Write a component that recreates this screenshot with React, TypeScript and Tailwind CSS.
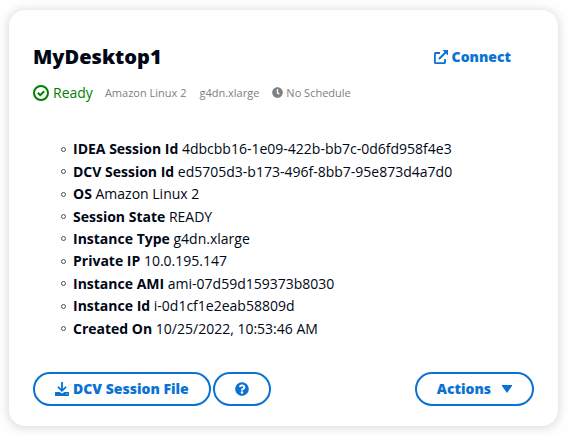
import { FaClock, FaQuestionCircle } from "react-icons/fa";

const details = [
  { label: "IDEA Session Id", value: "4dbcbb16-1e09-422b-bb7c-0d6fd958f4e3" },
  { label: "DCV Session Id", value: "ed5705d3-b173-496f-8bb7-95e873d4a7d0" },
  { label: "OS", value: "Amazon Linux 2" },
  { label: "Session State", value: "READY" },
  { label: "Instance Type", value: "g4dn.xlarge" },
  { label: "Private IP", value: "10.0.195.147" },
  { label: "Instance AMI", value: "ami-07d59d159373b8030" },
  { label: "Instance Id", value: "i-0d1cf1e2eab58809d" },
  { label: "Created On", value: "10/25/2022, 10:53:46 AM" },
];

function ExternalIcon() {
  return (
    <svg viewBox="0 0 14 14" className="size-3.5" fill="none" aria-hidden="true">
      <path d="M6 3H1.500a.6.6 0 0 0-.6.6v8.900a.6.6 0 0 0 .6.6h8.900a.6.6 0 0 0 .6-.6V9" stroke="currentColor" strokeWidth="1.800" />
      <path d="M5 9l6.500-6.500" stroke="currentColor" strokeWidth="2" />
      <path d="M8.500 0H14v5.500z" fill="currentColor" />
    </svg>
  );
}

function DownloadIcon() {
  return (
    <svg viewBox="0 0 14 14" className="size-3.5" fill="none" aria-hidden="true">
      <path d="M7 0v8.500M3 4.800L7 8.800 11 4.800" stroke="currentColor" strokeWidth="1.800" />
      <path fillRule="evenodd" d="M.5 10H4.500L7 11.500 9.500 10h4a.5.5 0 0 1 .5.5V13.500a.5.5 0 0 1-.5.5H.5a.5.5 0 0 1-.5-.5V10.500a.5.5 0 0 1 .5-.5zM11.500 11.500v1h1v-1z" fill="currentColor" />
    </svg>
  );
}

function ReadyIcon() {
  return (
    <svg viewBox="0 0 16 16" className="size-4" fill="none" stroke="currentColor" strokeWidth="2" aria-hidden="true">
      <circle cx="8" cy="8" r="7" />
      <path d="M4.800 7.800l2.400 2.400 4-4" />
    </svg>
  );
}

const outline =
  "flex h-[34px] items-center rounded-full border-2 border-[#0972d3] px-5 text-sm font-extrabold text-[#0972d3]";

export default function App() {
  return (
    <main className="bg-[#fefefe] pt-2.5 pr-[17px] pb-2.5 pl-[9px] font-['Open_Sans',sans-serif] text-sm text-[#000716]">
      <article className="rounded-2xl bg-white px-6 pt-8 pb-5 shadow-[0_1px_8px_2px_rgba(0,7,22,0.12)]">
        <header className="flex items-center justify-between pr-[23px]">
          <h1 className="text-xl leading-[30px] font-extrabold">MyDesktop1</h1>
          <a href="#connect" className="flex items-center gap-1 font-extrabold text-[#0972d3]">
            <ExternalIcon />
            Connect
          </a>
        </header>
        <div className="mt-[9px] flex h-6 items-center gap-3 text-[#808080]">
          <span className="flex items-center gap-1 text-[#008000]">
            <ReadyIcon />
            Ready
          </span>
          <div className="flex items-center gap-[13px] text-[11px]">
            <span>Amazon Linux 2</span>
            <span>g4dn.xlarge</span>
            <span className="flex items-center gap-[3px]">
              <FaClock className="size-[11px]" aria-hidden="true" />
              No Schedule
            </span>
          </div>
        </div>
        <ul className="mt-[33px] grid min-h-[202px] items-center pl-7">
          {details.map(({ label, value }) => (
            <li
              key={label}
              className="flex items-center gap-[7px] before:size-[5px] before:rounded-full before:border before:border-[#4b505b]"
            >
              <span>
                <strong className="font-bold">{label}</strong> {value}
              </span>
            </li>
          ))}
        </ul>
        <footer className="mt-8 flex items-center gap-0.5">
          <button type="button" className={`${outline} gap-1`}>
            <DownloadIcon />
            DCV Session File
          </button>
          <button type="button" aria-label="Help" className={outline}>
            <FaQuestionCircle className="size-3.5" aria-hidden="true" />
          </button>
          <button type="button" className={`${outline} ml-auto gap-[11px]`}>
            Actions
            <svg viewBox="0 0 10 8" className="h-2 w-2.5" aria-hidden="true">
              <path d="M0 0h10v1L5 8 0 1z" fill="currentColor" />
            </svg>
          </button>
        </footer>
      </article>
    </main>
  );
}
